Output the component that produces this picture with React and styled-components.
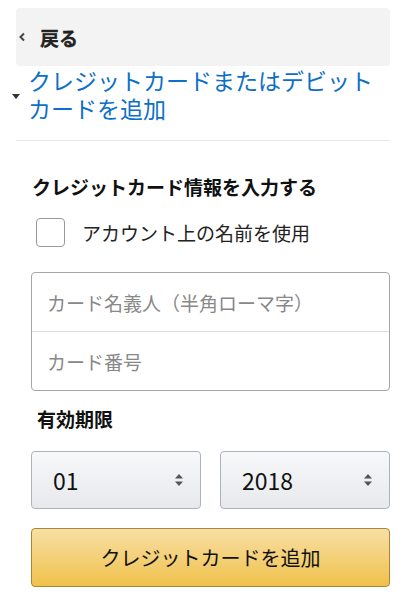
import styled, { createGlobalStyle } from "styled-components";

const GlobalStyle = createGlobalStyle`
  body {
    margin: 0;
    background: #fff;
    font-family: "Noto Sans CJK JP", "Noto Sans", sans-serif;
    color: #111;
  }
`;

export default function App() {
  return (
    <Page>
      <GlobalStyle />
      <BackBar>
        <Chevron viewBox="0 0 8 10">
          <path d="M6 1.5 L2.5 5 L6 8.5" fill="none" stroke="#444" strokeWidth="2" />
        </Chevron>
        <BackLabel>戻る</BackLabel>
      </BackBar>

      <SectionHead>
        <Caret />
        <SectionTitle>クレジットカードまたはデビットカードを追加</SectionTitle>
      </SectionHead>
      <Divider />

      <Form>
        <FormTitle>クレジットカード情報を入力する</FormTitle>
        <CheckRow>
          <Checkbox />
          <CheckLabel>アカウント上の名前を使用</CheckLabel>
        </CheckRow>

        <InputGroup>
          <Field>カード名義人（半角ローマ字）</Field>
          <Field $last>カード番号</Field>
        </InputGroup>

        <SubTitle>有効期限</SubTitle>
        <SelectRow>
          <Select>
            <span>01</span>
            <Arrows />
          </Select>
          <Select>
            <span>2018</span>
            <Arrows />
          </Select>
        </SelectRow>

        <AddButton>クレジットカードを追加</AddButton>
      </Form>
    </Page>
  );
}

function Arrows() {
  return (
    <ArrowIcon viewBox="0 0 10 14">
      <path d="M5 1 L9 5.5 H1 Z" fill="#555" />
      <path d="M5 13 L9 8.5 H1 Z" fill="#555" />
    </ArrowIcon>
  );
}

const Page = styled.div`
  width: 408px;
  padding: 8px 18px 0 16px;
  box-sizing: border-box;
`;

const BackBar = styled.div`
  display: flex;
  align-items: center;
  height: 58px;
  background: #f3f3f3;
  border-radius: 4px;
  padding-left: 2px;
`;

const Chevron = styled.svg`
  width: 8px;
  height: 10px;
  margin-right: 14px;
`;

const BackLabel = styled.span`
  font-size: 19px;
  font-weight: 700;
  color: #222;
  -webkit-text-stroke: 0.3px #222;
`;

const SectionHead = styled.div`
  display: flex;
  align-items: center;
  padding: 0 0 18px 0;
`;

const Caret = styled.span`
  width: 0;
  height: 0;
  border-left: 4px solid transparent;
  border-right: 4px solid transparent;
  border-top: 5px solid #333;
  margin: 4px 8px 0 -4px;
`;

const SectionTitle = styled.h1`
  margin: 0;
  font-size: 23px;
  font-weight: 400;
  line-height: 28px;
  color: #0d6fc7;
`;

const Divider = styled.hr`
  border: none;
  border-top: 1px solid #e7e7e7;
  margin: 0;
`;

const Form = styled.div`
  display: flex;
  flex-direction: column;
  padding: 0 0 0 15px;
`;

const FormTitle = styled.h2`
  margin: 33px 0 0 1px;
  font-size: 19px;
  font-weight: 700;
  line-height: 26px;
  color: #111;
`;

const CheckRow = styled.label`
  display: flex;
  align-items: center;
  margin-top: 18px;
  padding-left: 5px;
`;

const Checkbox = styled.span`
  width: 29px;
  height: 29px;
  border: 1px solid #999;
  border-radius: 4px;
  box-sizing: border-box;
`;

const CheckLabel = styled.span`
  margin-left: 17px;
  font-size: 19px;
  line-height: 26px;
  color: #222;
`;

const InputGroup = styled.div`
  margin-top: 25px;
  border: 1px solid #a6a6a6;
  border-radius: 4px;
  display: flex;
  flex-direction: column;
`;

const Field = styled.div`
  height: 58px;
  display: flex;
  align-items: center;
  padding-left: 15px;
  font-size: 19px;
  color: #888;
  border-bottom: ${(p) => (p.$last ? "none" : "1px solid #ddd")};
`;

const SubTitle = styled.h3`
  margin: 15px 0 0 6px;
  font-size: 19px;
  font-weight: 700;
  line-height: 26px;
  color: #111;
`;

const SelectRow = styled.div`
  display: grid;
  grid-template-columns: 1fr 1fr;
  gap: 19px;
  margin-top: 19px;
`;

const Select = styled.div`
  height: 58px;
  box-sizing: border-box;
  display: flex;
  align-items: center;
  justify-content: space-between;
  padding: 0 16px 0 21px;
  border: 1px solid #adb1b8;
  border-radius: 4px;
  background: linear-gradient(#f7f8fa, #e7e9ec);
  font-size: 23px;
  color: #111;
`;

const ArrowIcon = styled.svg`
  width: 10px;
  height: 14px;
`;

const AddButton = styled.button`
  margin-top: 19px;
  height: 59px;
  border: 1px solid #a88734;
  border-radius: 4px;
  background: linear-gradient(#f7dfa5, #f0c14b);
  font-family: inherit;
  font-size: 20px;
  color: #111;
  cursor: pointer;
`;
